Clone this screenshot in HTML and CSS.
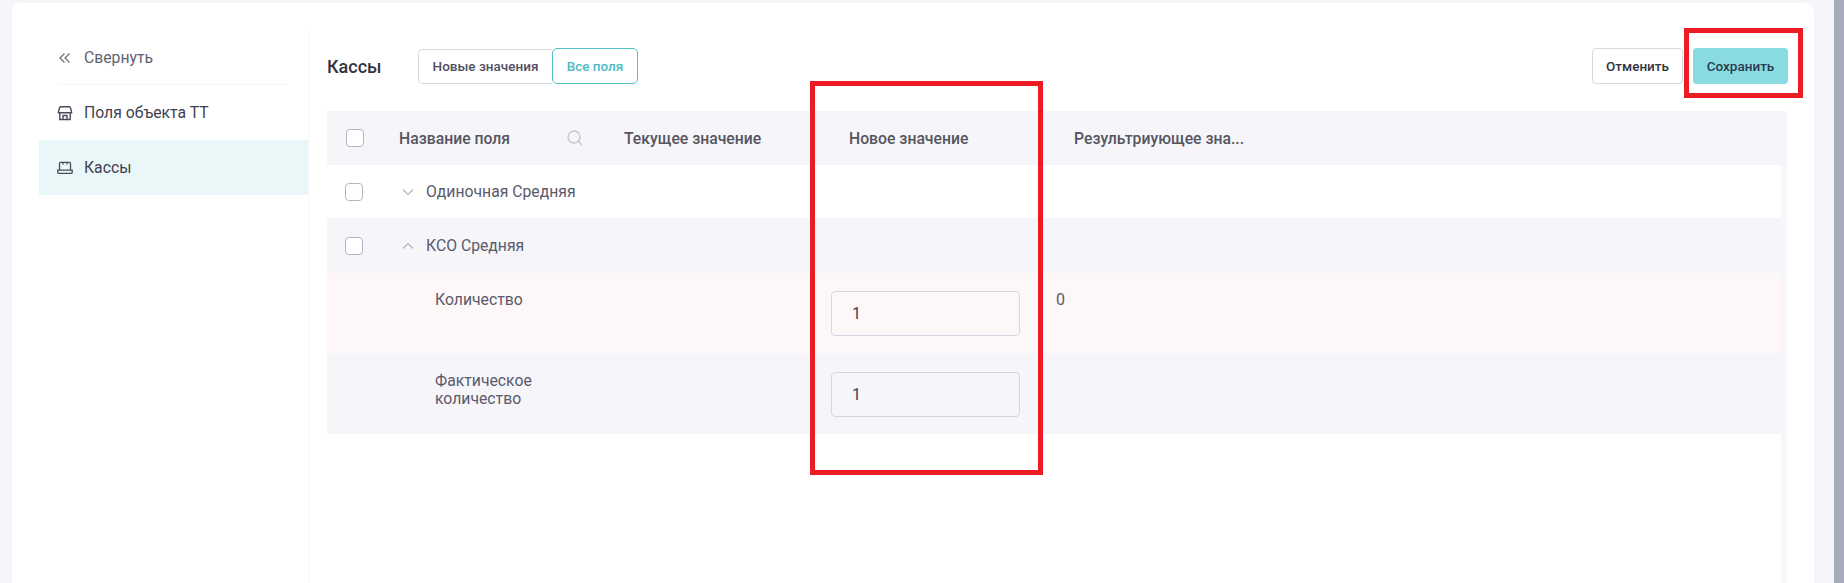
FILE: index.html
```html
<!DOCTYPE html>
<html lang="ru">
<head>
<meta charset="UTF-8">
<title>Кассы</title>
<link rel="stylesheet" href="styles.css">
</head>
<body>

<div class="page">
    <div class="card">
        <aside class="sidebar">
            <div class="side-item side-collapse">
                <svg class="side-icon" viewBox="0 0 16 16" fill="none" stroke="#6b6b7b" stroke-width="1.2"><path d="M7.5 3.5 3 8l4.5 4.5M12.5 3.5 8 8l4.5 4.5"/></svg>
                <span>Свернуть</span>
            </div>
            <div class="side-item">
                <svg class="side-icon" viewBox="0 0 16 16" fill="none" stroke="#4a4a5a" stroke-width="1.4"><path d="M4 1.7h8a1.5 1.5 0 0 1 1.4 1L14.6 7v.8H1.4V7l1.2-4.3A1.5 1.5 0 0 1 4 1.7zM2.8 7.8v6.7h10.4V7.8M6 14.5v-4h4v4"/></svg>
                <span>Поля объекта ТТ</span>
            </div>
            <div class="side-item active">
                <svg class="side-icon" viewBox="0 0 16 16" fill="none" stroke="#4a4a5a" stroke-width="1.3"><path d="M2.5 10V3.4a1 1 0 0 1 1-1h9a1 1 0 0 1 1 1V10M.8 10.2h14.4v2.2a1 1 0 0 1-1 1H1.8a1 1 0 0 1-1-1zM6 2.4v2M10 2.4v2"/></svg>
                <span>Кассы</span>
            </div>
        </aside>

        <main class="content">
            <div class="head">
                <h1 class="title">Кассы</h1>
                <div class="tabs">
                    <button class="tab">Новые значения</button>
                    <button class="tab tab-on">Все поля</button>
                </div>
                <div class="actions">
                    <button class="btn">Отменить</button>
                    <button class="btn btn-save">Сохранить</button>
                </div>
            </div>

            <div class="table">
                <div class="row row-head">
                    <div class="cell-check"><span class="check check-head"></span></div>
                    <div class="cell cell-name">
                        <span>Название поля</span>
                        <svg class="search" viewBox="0 0 16 16" fill="none" stroke="#c6c6d0" stroke-width="1.4"><circle cx="7" cy="7" r="6"/><path d="m11.5 11.5 3.5 3.5"/></svg>
                    </div>
                    <div class="cell">Текущее значение</div>
                    <div class="cell">Новое значение</div>
                    <div class="cell">Результриующее зна...</div>
                </div>

                <div class="body">
                    <div class="row row-group row-first">
                        <div class="cell-check"><span class="check"></span></div>
                        <div class="group-name">
                            <svg class="chevron" viewBox="0 0 12 8" fill="none" stroke="#b5b5c0" stroke-width="1.2"><path d="m1 1.5 5 5 5-5"/></svg>
                            <span>Одиночная Средняя</span>
                        </div>
                    </div>
                    <div class="row row-group row-grey">
                        <div class="cell-check"><span class="check"></span></div>
                        <div class="group-name">
                            <svg class="chevron" viewBox="0 0 12 8" fill="none" stroke="#b5b5c0" stroke-width="1.2"><path d="m1 6.5 5-5 5 5"/></svg>
                            <span>КСО Средняя</span>
                        </div>
                    </div>
                    <div class="row row-field row-pink">
                        <div></div>
                        <div class="field-name">Количество</div>
                        <div></div>
                        <div><input class="field-input" type="text" value="1"></div>
                        <div class="field-result">0</div>
                    </div>
                    <div class="row row-field row-grey">
                        <div></div>
                        <div class="field-name">Фактическое количество</div>
                        <div></div>
                        <div><input class="field-input" type="text" value="1"></div>
                        <div class="field-result"></div>
                    </div>
                </div>
            </div>
        </main>
    </div>
    <div class="scrollbar"></div>

    <!-- annotations on top of the screenshot -->
    <div class="mark mark-column"></div>
    <div class="mark mark-save"></div>
</div>

</body>
</html>
```

FILE: styles.css
```css
html, body {
    margin: 0;
    padding: 0;
    height: 100%;
    overflow: hidden;
}

body {
    font-family: Roboto, "Liberation Sans", sans-serif;
    background-color: #f5f5fa;
    color: #5a5a6a;
}

.page {
    position: relative;
    display: flex;
    height: 583px;
    overflow: hidden;
    padding: 3px 0 0 12px;
    box-sizing: border-box;
}

.card {
    display: flex;
    width: 1802px;
    margin-right: 20px;
    height: 620px;
    padding: 27px 27px 0;
    box-sizing: border-box;
    background-color: #fff;
    border-radius: 8px 8px 0 0;
}

.scrollbar {
    flex: 0 0 10px;
    margin-top: -3px;
    height: 586px;
    background-color: #a8abbd;
}

/* sidebar */
.sidebar {
    flex: 0 0 270px;
    box-sizing: border-box;
    border-right: 1px solid #f4f4f8;
}

.side-item {
    display: flex;
    align-items: center;
    height: 55px;
    padding-left: 18px;
    font-size: 15.75px;
    color: #3f3f4f;
}

.side-collapse {
    position: relative;
    color: #62626f;
}

.side-collapse::after {
    content: "";
    position: absolute;
    left: 18px;
    right: 20px;
    bottom: 0;
    border-bottom: 1px solid #f5f5f8;
}

.side-item.active {
    background-color: #eaf7f8;
}

.side-icon {
    width: 16px;
    height: 16px;
    margin-right: 11px;
    flex: none;
}

/* main part */
.content {
    flex: 1;
    min-width: 0;
    padding: 18px 0 0 18px;
}

.head {
    display: flex;
    align-items: center;
    height: 36px;
    margin-bottom: 27px;
}

.title {
    width: 91px;
    margin: 0;
    font-size: 18px;
    font-weight: 500;
    color: #33333f;
}

.tabs {
    display: flex;
    align-items: center;
}

.tab, .btn {
    height: 36px;
    box-sizing: border-box;
    background-color: #fff;
    border: 1px solid #d8d8e0;
    font-family: inherit;
    font-size: 13.5px;
    font-weight: 500;
    color: #4f4f5f;
}

.tab {
    width: 134px;
    height: 35px;
    padding: 0;
    border-radius: 5px 0 0 5px;
    border-right: 0;
}

.tab-on {
    width: 86px;
    height: 36px;
    border: 1px solid #4fc0c8;
    border-radius: 5px;
    color: #4cbcc4;
}

.actions {
    display: flex;
    gap: 10px;
    margin-left: auto;
    margin-right: -1px;
}

.btn {
    width: 91px;
    padding: 0;
    border-radius: 4px;
    color: #33333f;
}

.btn-save {
    width: 95px;
    border: 0;
    background-color: #88dce1;
    color: #2b3a4c;
}

/* table, with the thin scroll track on the right */
.table {
    height: 500px;
    background: linear-gradient(#f6f6fb, #f6f6fb) no-repeat right top / 6px 100%;
}

.body {
    margin-right: 6px;
}

.row {
    display: grid;
    grid-template-columns: 54px 225px 225px 225px 1fr;
    font-size: 15.75px;
}

.row-head {
    height: 54px;
    align-items: center;
    font-weight: 500;
    color: #55555f;
    background-color: #f5f5fa;
}

.row-group {
    grid-template-columns: 54px 1fr;
    height: 55px;
    align-items: center;
}

.row-first {
    height: 53px;
    background-color: #fff;
}

.row-grey {
    background-color: #f5f5fa;
}

.row-field {
    height: 80px;
}

.row-pink.row-field {
    height: 81px;
    background-color: #fef7f7;
}

.cell {
    padding-left: 18px;
}

.cell-name {
    display: flex;
    align-items: center;
    justify-content: space-between;
    padding-right: 23px;
}

.cell-check {
    display: flex;
    padding-left: 18px;
}

.check {
    display: block;
    width: 18px;
    height: 18px;
    box-sizing: border-box;
    border: 1px solid #b5b5c2;
    border-radius: 4px;
    background-color: #fff;
}

.check-head {
    margin-left: 1px;
}

.search {
    width: 16px;
    height: 16px;
}

.group-name {
    display: flex;
    align-items: center;
    padding-left: 21px;
}

.chevron {
    width: 12px;
    height: 8px;
    margin-right: 12px;
}

.field-name {
    padding: 18px 18px 0 54px;
    line-height: 18px;
}

.field-input {
    display: block;
    box-sizing: border-box;
    width: 189px;
    height: 45px;
    margin-top: 18px;
    padding: 0 0 0 20px;
    background: transparent;
    border: 1px solid #d6d6e2;
    border-radius: 4px;
    font-family: inherit;
    font-size: 16px;
    color: #3f3f4f;
}

.field-result {
    padding-top: 18px;
    line-height: 18px;
    font-size: 16px;
}

/* red annotation frames */
.mark {
    position: absolute;
    box-sizing: border-box;
    border: 5px solid #ed1c24;
}

.mark-column {
    left: 810px;
    top: 81px;
    width: 233px;
    height: 394px;
}

.mark-save {
    left: 1684px;
    top: 28px;
    width: 119px;
    height: 70px;
}
```
